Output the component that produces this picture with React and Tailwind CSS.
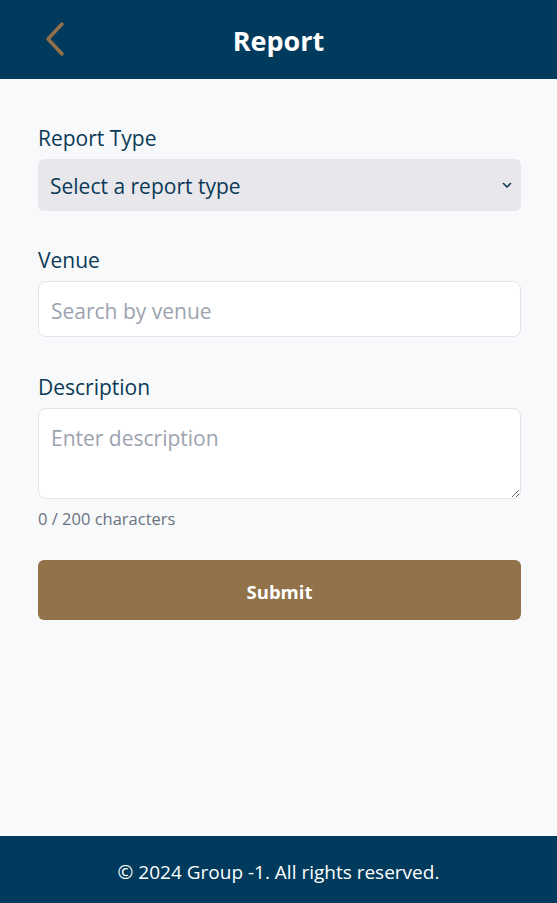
import { useState } from 'react'

function App() {
  const [desc, setDesc] = useState('')
  const [venue, setVenue] = useState('')
  const [type, setType] = useState('')

  return (
    <div className="min-h-screen flex flex-col bg-[#f8f9fb] font-['Open_Sans',sans-serif]">
      <header className="h-[79px] bg-[#003a5c] flex items-center justify-center relative">
        <button className="absolute left-[40px] top-[20px] w-[30px] h-[38px] flex items-center justify-center">
          <svg width="24" height="36" viewBox="0 0 24 36" fill="none">
            <path d="M19 3 L5 18 L19 33" stroke="#94704a" strokeWidth="3.5" strokeLinecap="round" strokeLinejoin="round" />
          </svg>
        </button>
        <h1 className="pt-[3px] text-[27px] font-bold text-white">Report</h1>
      </header>

      <main className="flex-1 pl-[38px] pr-[36px] pt-[45px]">
        <label className="block text-[21px] leading-7 text-[#0b3a57] mb-[7px]">Report Type</label>
        <div className="relative">
          <select
            value={type}
            onChange={(e) => setType(e.target.value)}
            className="w-full h-[52px] appearance-none rounded-md bg-[#e8e8ec] px-3 pt-[3px] text-[21px] text-[#0b3a57] outline-none"
          >
            <option value="">Select a report type</option>
            <option value="noise">Noise</option>
            <option value="safety">Safety</option>
            <option value="other">Other</option>
          </select>
          <svg className="absolute right-[9px] top-[23px] pointer-events-none" width="10" height="7" viewBox="0 0 10 7" fill="none">
            <path d="M1.5 1.5 L5 5 L8.5 1.5" stroke="#0b3a57" strokeWidth="1.6" strokeLinecap="round" strokeLinejoin="round" />
          </svg>
        </div>

        <label className="block text-[21px] leading-7 text-[#0b3a57] mt-[35px] mb-[7px]">Venue</label>
        <input
          value={venue}
          onChange={(e) => setVenue(e.target.value)}
          placeholder="Search by venue"
          className="w-full h-[56px] rounded-lg border border-[#e3e4e8] bg-white px-3 pt-[3px] text-[21px] text-[#0b3a57] placeholder:text-[#9ca3af] outline-none"
        />

        <label className="block text-[21px] leading-7 text-[#0b3a57] mt-[36px] mb-[7px]">Description</label>
        <textarea
          value={desc}
          maxLength={200}
          onChange={(e) => setDesc(e.target.value)}
          placeholder="Enter description"
          className="block w-full h-[91px] rounded-lg border border-[#e3e4e8] bg-white px-3 pt-[17px] text-[21px] leading-6 text-[#0b3a57] placeholder:text-[#9ca3af] outline-none"
        />
        <p className="mt-2 text-[16.5px] leading-6 text-[#6b7280]">{desc.length} / 200 characters</p>

        <button className="mt-[29px] w-full h-[60px] rounded-md bg-[#917249] pt-[3px] text-[18.5px] font-bold text-white">
          Submit
        </button>
      </main>

      <footer className="h-[67px] bg-[#003a5c] flex items-center justify-center">
        <p className="pt-[6px] text-[19px] text-white">© 2024 Group -1. All rights reserved.</p>
      </footer>
    </div>
  )
}

export default App
